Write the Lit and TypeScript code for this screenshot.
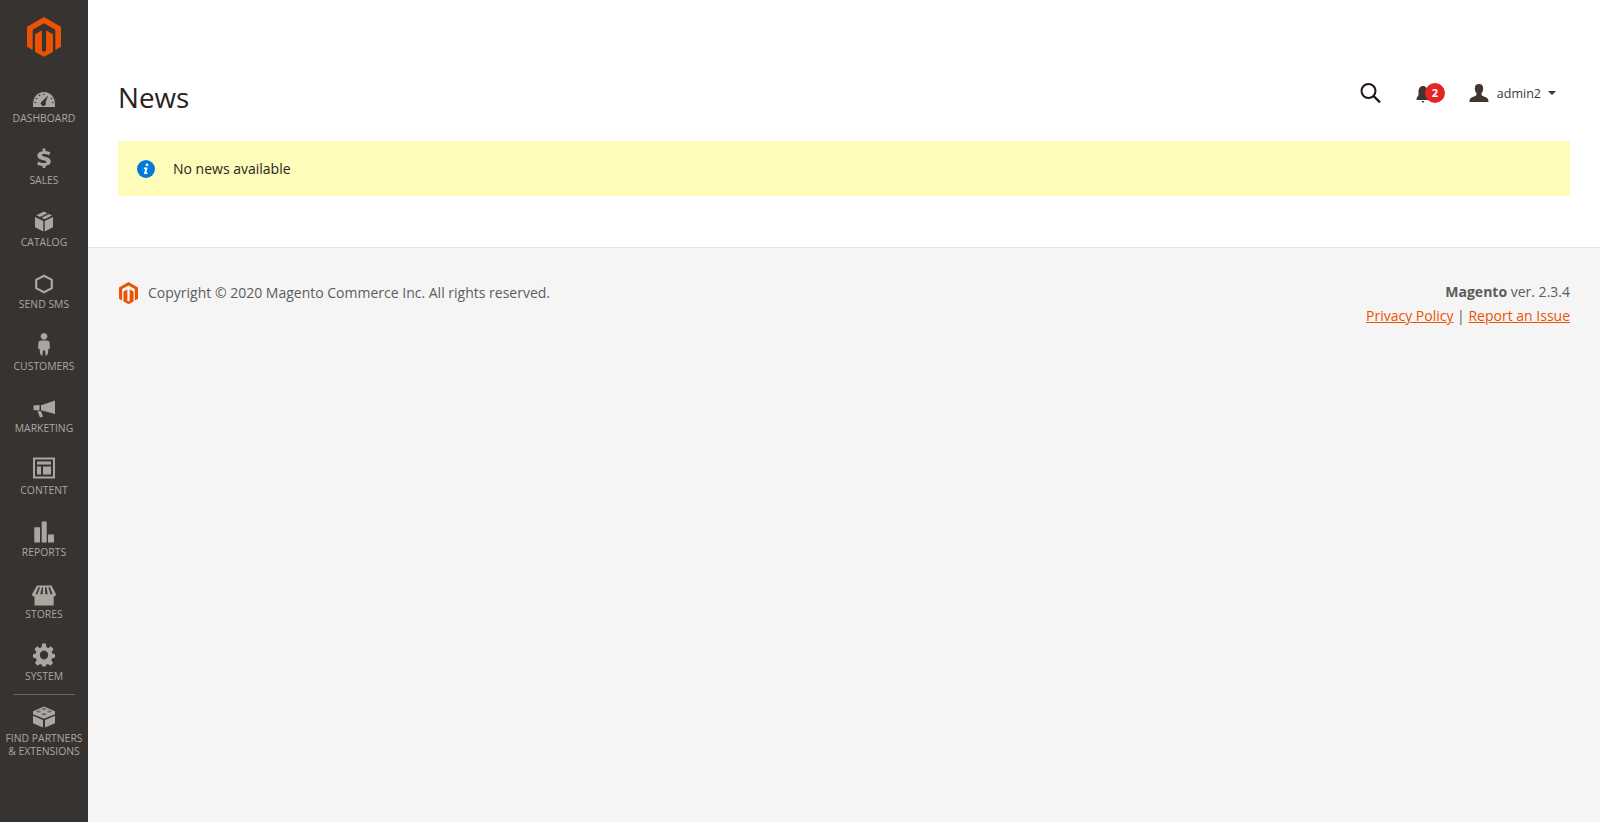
import { LitElement, html, css, svg } from "lit";
import { customElement } from "lit/decorators.js";

const logo = (w: number, cls: string) => html`<svg class=${cls} width=${w} height=${(w * 42) / 36} viewBox="0 0 36 42"><path fill="currentColor" d="M18 0 36 10.4V31.6L30 35V13.5L18 6.5 6 13.5V35L0 31.6V10.4Z"/><path fill="currentColor" d="M8.5 18.2 15.8 14V35.5L18 37 20.2 35.5V14L27.5 18.2V37.2L18 42 8.5 37.2Z"/></svg>`;

const icons: Record<string, unknown> = {
  dash: svg`<path d="M1 22V19.5C1 12 5.5 7 12 7S23 12 23 19.5V22Z"/><g fill="#373330"><circle cx="12" cy="9.2" r=".8"/><circle cx="7.6" cy="10.4" r=".8"/><circle cx="4.5" cy="13.5" r=".8"/><circle cx="3.2" cy="17.5" r=".8"/><circle cx="20.8" cy="17.5" r=".8"/><circle cx="19.5" cy="13.5" r=".8"/><path d="M16.2 10.5 13.5 17.2A2.5 2.5 0 1 1 10.2 16.2Z"/></g>`,
  sales: svg`<path transform="translate(0 .65) scale(1 .85)" d="M10.6 1H13.4V4C15.6 4.2 17.2 4.9 18.4 5.7L17 9C15.5 8 13.8 7.4 12 7.4 10.6 7.4 9.9 7.9 9.9 8.7 9.9 9.6 11 10 13 10.6 16.4 11.5 18.8 12.9 18.8 16.3 18.8 19 16.8 21 13.4 21.5V24H10.6V21.6C8.3 21.4 6.3 20.6 5 19.5L6.5 16.2C8 17.4 10 18.2 11.9 18.2 13.5 18.2 14.3 17.7 14.3 16.8 14.3 15.9 13.4 15.4 11.3 14.9 8 14 5.4 12.8 5.4 9.3 5.4 6.6 7.3 4.6 10.6 4.1Z"/>`,
  catalog: svg`<path d="M12 2.5 15.5 4.2 8 8 4.3 6.2ZM17 5 20 6.5 12.6 10.3 9.6 8.8ZM3 8 11.3 12V22.5L3 18.2ZM21 8V18.2L12.7 22.5V12Z"/>`,
  sms: svg`<path fill="none" stroke-width="2.2" stroke="currentColor" d="M12 4.8 19.8 8.8V17.2L12 21.2 4.2 17.2V8.8Z"/>`,
  customers: svg`<path d="M12 0a3.4 3.4 0 1 1-.01 0ZM9 7.5H15C16.7 7.5 17.5 8.4 17.6 10L17.9 16.5 16.4 15.5 16 20.5 13.8 23.5 13 17.5H11L10.2 23.5 8 20.5 7.6 15.5 6.1 16.5 6.4 10C6.5 8.4 7.3 7.5 9 7.5Z"/>`,
  marketing: svg`<path d="M23 5.5V19L10 15.5H9V10H10ZM1.5 10.5 7.5 10V15.5L1.5 15ZM5.5 16.2H9L11 21.5 8 22.5Z"/>`,
  content: svg`<path fill-rule="evenodd" d="M1 .5H23V21.5H1ZM3 2.5V19.5H21V2.5ZM5 4.5H19V7.5H5ZM5 9.5H9V17.5H5ZM11 9.5H19V17.5H11Z"/>`,
  reports: svg`<path d="M2.3 8.2H8V23.5H2.3ZM9.7 2.5H14.7V23.5H9.7ZM16 15.5H22V23.5H16Z"/>`,
  stores: svg`<path transform="translate(0 3.6) scale(1 .91)" fill-rule="evenodd" d="M5 1H19.5L24 10.5C24 12.4 22.6 13 21.7 13V23H2.5V13C1.4 13 0 12.4 0 10.5ZM6.5 3 3.5 10.5H5.3L8.1 3ZM10 3 8.3 10.5H10.6L11.1 3ZM13 3 13.4 10.5H15.7L14.4 3ZM16.3 3 18.7 10.5H20.5L18 3Z"/>`,
  system: svg`<path transform="translate(1 .5) scale(.917 .98)" fill-rule="evenodd" d="M10 0H14L14.6 3.7 16.7 4.6 19.5 2.7 22.4 5.6 20.5 8.4 21.3 10.4 24 11V14.4L20.9 15 20 17 21.9 19.8 19 22.7 16.2 20.8 14.3 21.6 13.7 23.5H10.3L9.7 21.6 7.8 20.8 5 22.7 2.1 19.8 4 17 3.1 15 0 14.4V11L2.7 10.4 3.5 8.4 1.6 5.6 4.5 2.7 7.3 4.6 9.4 3.7ZM12 7.2A4.5 4.5 0 1 0 12.01 7.2Z"/>`,
  partners: svg`<path d="M12 1.5 23 6.3V9.3L12 13.8 1 9.3V6.3ZM1 10.7 11 14.9V22.5L1 18.2ZM23 10.7V18.2L13 22.5V14.9Z"/><g fill="#373330"><ellipse cx="12" cy="4" rx="2.4" ry="1" opacity=".55"/><ellipse cx="6.5" cy="6.6" rx="2.4" ry="1" opacity=".55"/><ellipse cx="17.5" cy="6.6" rx="2.4" ry="1" opacity=".55"/><ellipse cx="12" cy="9.2" rx="2.4" ry="1" opacity=".55"/></g>`,
};

const items: [string, string][] = [
  ["dash", "DASHBOARD"],
  ["sales", "SALES"],
  ["catalog", "CATALOG"],
  ["sms", "SEND SMS"],
  ["customers", "CUSTOMERS"],
  ["marketing", "MARKETING"],
  ["content", "CONTENT"],
  ["reports", "REPORTS"],
  ["stores", "STORES"],
  ["system", "SYSTEM"],
];

@customElement("app-root")
export class AppRoot extends LitElement {
  static styles = css`
    :host {
      display: flex;
      min-height: 822px;
      font-family: "Open Sans", sans-serif;
      background: #f5f5f5;
    }
    .side {
      width: 88px;
      flex: none;
      background: #373330;
      color: #aaa6a0;
      display: flex;
      flex-direction: column;
      align-items: center;
    }
    .logo-wrap {
      height: 85px;
      padding-top: 17px;
      box-sizing: border-box;
      color: #eb5202;
    }
    .logo { display: block; }
    .item {
      height: 62px;
      width: 88px;
      display: flex;
      flex-direction: column;
      align-items: center;
      text-align: center;
      flex: none;
    }
    .item svg {
      display: block;
      fill: currentColor;
      flex: none;
      margin-bottom: 3px;
      overflow: visible;
    }
    .label {
      font-size: 10.4px;
      line-height: 13px;
      color: #aaa6a0;
      white-space: nowrap;
    }
    .rule {
      width: 61px;
      height: 1px;
      flex: none;
      background: #736963;
      margin: -11px 0 10px;
    }
    .main {
      flex: 1;
      display: flex;
      flex-direction: column;
      min-width: 0;
    }
    .top {
      background: #fff;
      height: 247px;
      border-bottom: 1px solid #e3e3e3;
      padding: 0 30px;
    }
    .head {
      height: 141px;
      display: flex;
      align-items: flex-start;
      justify-content: space-between;
    }
    h1 {
      margin: 74px 0 0;
      font-size: 27.8px;
      font-weight: 400;
      line-height: 46px;
      color: #2b211b;
    }
    .actions {
      display: flex;
      align-items: center;
      margin: 79px 14px 0 0;
      height: 28px;
      color: #41362f;
    }
    .search { margin-right: 35px; display: block; }
    .bell { position: relative; width: 29px; height: 24px; margin-right: 24px; }
    .bell svg { position: absolute; left: 0; top: 5px; }
    .badge {
      position: absolute;
      left: 9px;
      top: 2px;
      width: 20px;
      height: 20px;
      border-radius: 50%;
      background: #e22626;
      color: #fff;
      font-size: 11px;
      font-weight: 700;
      line-height: 20px;
      text-align: center;
    }
    .user { display: flex; align-items: center; font-size: 12.5px; color: #41362f; }
    .user svg { margin-right: 8px; display: block; }
    .caret {
      margin-left: 7px;
      width: 0;
      height: 0;
      border: 4px solid transparent;
      border-top: 4px solid #41362f;
      border-bottom: 0;
    }
    .msg {
      height: 55px;
      background: #fffbbb;
      display: flex;
      align-items: center;
      padding-left: 19px;
      font-size: 14px;
      color: #262626;
    }
    .msg svg { margin-right: 18px; display: block; }
    .foot {
      flex: 1;
      display: flex;
      justify-content: space-between;
      padding: 0 30px;
      font-size: 14px;
      color: #5c5c5c;
    }
    .copy { display: flex; align-items: center; height: 24px; margin-top: 32px; }
    .copy .mark { color: #eb5202; margin: 2px 10px 0 1px; display: block; }
    .ver { margin-top: 32px; text-align: right; line-height: 24px; }
    .ver a { color: #eb5202; text-decoration: underline; }
  `;

  render() {
    return html`
      <nav class="side">
        <div class="logo-wrap">${logo(34, "logo")}</div>
        ${items.map(
          ([k, l]) => html`<div class="item">
            <svg width="24" height="24" viewBox="0 0 24 24">${icons[k]}</svg>
            <span class="label">${l}</span>
          </div>`
        )}
        <div class="rule"></div>
        <div class="item">
          <svg width="24" height="24" viewBox="0 0 24 24">${icons.partners}</svg>
          <span class="label">FIND PARTNERS<br />&amp; EXTENSIONS</span>
        </div>
      </nav>
      <div class="main">
        <div class="top">
          <div class="head">
            <h1>News</h1>
            <div class="actions">
              <svg class="search" width="21" height="20" viewBox="0 0 21 20" fill="none" stroke="#1f1712" stroke-width="2"><circle cx="8.5" cy="8" r="7"/><path d="M13.5 13 20 19.3" stroke-width="2.4"/></svg>
              <div class="bell">
                <svg width="16" height="17" viewBox="0 0 16 17" fill="#41362f"><path d="M7 0C4 0 2.5 2.5 2.5 5.5V9L.5 12.5V14H13.5V12.5L11.5 9V5.5C11.5 2.5 10 0 7 0Z"/><path d="M5.5 15H8.5L7 17Z"/></svg>
                <span class="badge">2</span>
              </div>
              <div class="user">
                <svg width="20" height="18" viewBox="0 0 20 18" fill="#41362f"><path d="M10 0C13 0 14.3 2 14.2 4.6 14.1 7 13 8.8 12.4 9.8 12.4 11.3 13.2 11.9 15 12.5 18 13.5 19.5 14.5 19.5 18H.5C.5 14.5 2 13.5 5 12.5 6.8 11.9 7.6 11.3 7.6 9.8 7 8.8 5.9 7 5.8 4.6 5.7 2 7 0 10 0Z"/></svg>
                admin2
                <span class="caret"></span>
              </div>
            </div>
          </div>
          <div class="msg">
            <svg width="18" height="18" viewBox="0 0 18 18"><circle cx="9" cy="9" r="9" fill="#007bdb"/><circle cx="10" cy="4.8" r="1.4" fill="#fff"/><path d="M7 7.5H10.6L9.4 12.6H10.6L10.3 14H7L8.1 8.9H6.8Z" fill="#fff"/></svg>
            No news available
          </div>
        </div>
        <div class="foot">
          <div class="copy">${logo(19, "mark")}Copyright © 2020 Magento Commerce Inc. All rights reserved.</div>
          <div class="ver">
            <div><b>Magento</b> ver. 2.3.4</div>
            <div><a>Privacy Policy</a> | <a>Report an Issue</a></div>
          </div>
        </div>
      </div>
    `;
  }
}
